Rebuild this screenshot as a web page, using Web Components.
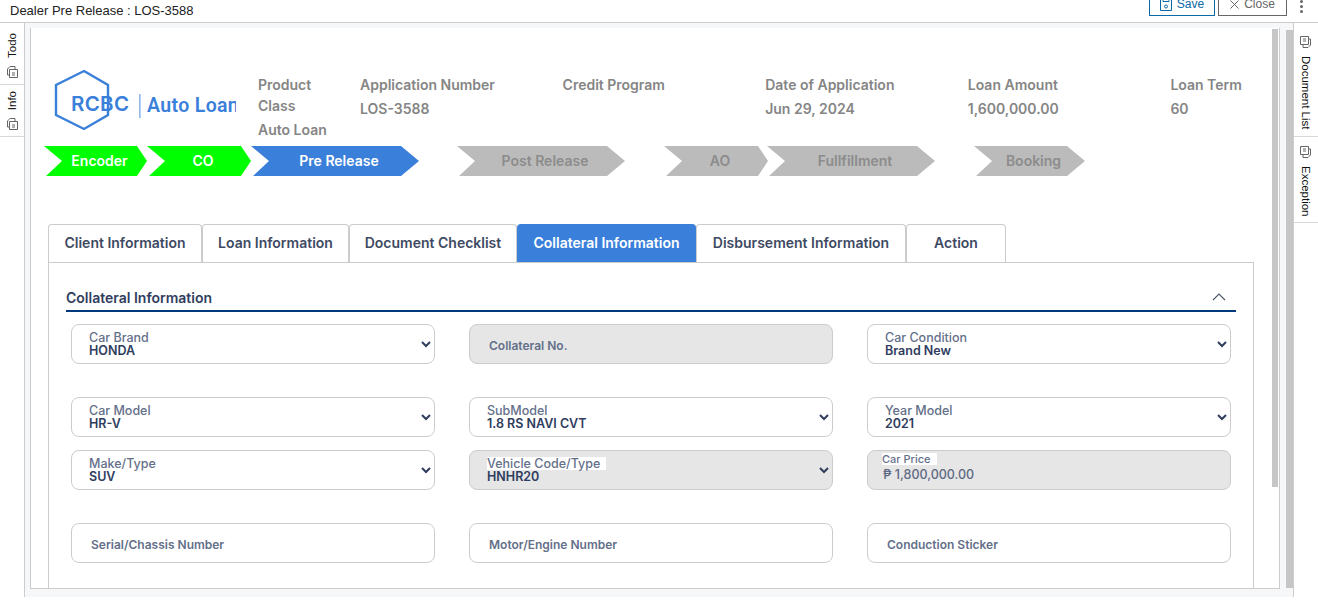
<!DOCTYPE html>
<html>
<head>
<meta charset="utf-8">
<title>Dealer Pre Release</title>
<style>
  html, body { margin: 0; height: 100%; overflow: hidden; background: #fff; }
  body { font-family: Inter, "Open Sans", sans-serif; }
</style>
</head>
<body>
<los-shell>
  <los-header slot="header" title-text="Dealer Pre Release : LOS-3588"></los-header>
  <los-rail slot="left" side="left">
    <los-rail-item label="Todo"></los-rail-item>
    <los-rail-item label="Info"></los-rail-item>
  </los-rail>
  <los-panel slot="main">
    <loan-summary></loan-summary>
    <loan-steps></loan-steps>
    <tab-bar></tab-bar>
    <tab-body>
      <section-title>Collateral Information</section-title>
      <field-grid>
        <form-field label="Car Brand" value="HONDA" kind="select"></form-field>
        <form-field label="Collateral No." kind="text" disabled></form-field>
        <form-field label="Car Condition" value="Brand New" kind="select"></form-field>
        <form-field label="Car Model" value="HR-V" kind="select"></form-field>
        <form-field label="SubModel" value="1.8 RS NAVI CVT" kind="select"></form-field>
        <form-field label="Year Model" value="2021" kind="select"></form-field>
        <form-field label="Make/Type" value="SUV" kind="select"></form-field>
        <form-field label="Vehicle Code/Type" value="HNHR20" kind="select" disabled></form-field>
        <form-field label="Car Price" value="₱ 1,800,000.00" kind="price" disabled></form-field>
        <form-field label="Serial/Chassis Number" kind="text"></form-field>
        <form-field label="Motor/Engine Number" kind="text"></form-field>
        <form-field label="Conduction Sticker" kind="text"></form-field>
      </field-grid>
    </tab-body>
  </los-panel>
  <los-rail slot="right" side="right">
    <los-rail-item label="Document List"></los-rail-item>
    <los-rail-item label="Exception"></los-rail-item>
  </los-rail>
</los-shell>

<script>
class LosShell extends HTMLElement {
  connectedCallback() {
    this.attachShadow({ mode: 'open' });
    this.shadowRoot.innerHTML = `
      <style>
        :host { display: block; height: 609px; overflow: hidden; }
        .top { height: 23px; box-sizing: border-box; border-bottom: 1px solid #ccc; }
        .mid {
          height: 574px;
          box-sizing: border-box;
          border-bottom: 1px solid #d4d4d4;
          display: grid;
          grid-template-columns: 25px 1fr 25px;
        }
        .work {
          background: #f6f7f9;
          display: flex;
          padding: 5px 0 8px 5px;
          min-width: 0;
        }
        .bar { width: 7px; margin: 2px 0 1px 6px; background: #c6c6c6; flex: none; }
      </style>
      <div class="top"><slot name="header"></slot></div>
      <div class="mid">
        <slot name="left"></slot>
        <div class="work">
          <slot name="main"></slot>
          <div class="bar"></div>
        </div>
        <slot name="right"></slot>
      </div>
    `;
  }
}

class LosHeader extends HTMLElement {
  connectedCallback() {
    this.attachShadow({ mode: 'open' });
    this.shadowRoot.innerHTML = `
      <style>
        :host {
          display: flex;
          align-items: flex-end;
          height: 22px;
          overflow: hidden;
          padding: 0 15px 6px 10px;
          box-sizing: border-box;
          font: 12px "Liberation Sans", Arial, sans-serif;
          color: #222;
        }
        .title { flex: 1; font-size: 13px; line-height: 15px; margin-bottom: -2px; }
        button {
          height: 24px;
          box-sizing: border-box;
          background: #fff;
          font: 12px "Liberation Sans", Arial, sans-serif;
          display: flex;
          align-items: center;
          justify-content: center;
          gap: 5px;
          padding: 0;
        }
        .save { width: 66px; border: 1px solid #0a6aa8; color: #0a6aa8; margin-right: 3px; }
        .close { width: 69px; border: 1px solid #666; color: #666; }
        .dots { display: flex; flex-direction: column; gap: 2px; margin-left: 13px; margin-bottom: 3px; }
        .dots i { width: 3px; height: 3px; border-radius: 50%; background: #666; display: block; }
      </style>
      <div class="title">${this.getAttribute('title-text')}</div>
      <button class="save">
        <svg width="12" height="14" viewBox="0 0 12 14" fill="none" stroke="#0a6aa8">
          <path d="M.5 .5h11v13H.5z"/><path d="M3 .5v4h6v-4"/><circle cx="6" cy="9.5" r="1.5"/>
        </svg>Save</button>
      <button class="close">
        <svg width="9" height="9" viewBox="0 0 9 9" stroke="#666"><path d="M.5 .5l8 8M8.5 .5l-8 8"/></svg>Close</button>
      <div class="dots"><i></i><i></i><i></i></div>
    `;
  }
}

class LosRail extends HTMLElement {
  connectedCallback() {
    this.attachShadow({ mode: 'open' });
    const left = this.getAttribute('side') === 'left';
    this.shadowRoot.innerHTML = `
      <style>
        :host {
          display: block;
          box-sizing: border-box;
          ${left ? 'border-right: 1px solid #ccc;' : 'border-left: 1px solid #ccc;'}
          background: #fff;
          padding-top: 4px;
        }
      </style>
      <slot></slot>
    `;
    this.querySelectorAll('los-rail-item').forEach(el => el.setAttribute('side', this.getAttribute('side')));
  }
}

class LosRailItem extends HTMLElement {
  connectedCallback() {
    this.attachShadow({ mode: 'open' });
    const left = this.closest('los-rail').getAttribute('side') === 'left';
    this.shadowRoot.innerHTML = `
      <style>
        :host {
          display: flex;
          flex-direction: ${left ? 'column-reverse' : 'column'};
          align-items: center;
          gap: 8px;
          padding: ${left ? '6px 0 6px' : '0 0 6px'};
          border-bottom: 1px solid #d8d8d8;
          font: 11.5px "Liberation Sans", Arial, sans-serif;
          color: #111;
        }
        span {
          writing-mode: vertical-rl;
          ${left ? 'transform: rotate(180deg);' : ''}
          line-height: 14px;
        }
        svg { display: block; ${left ? '' : 'margin-top: 9px;'} }
      </style>
      <svg width="12" height="12" viewBox="0 0 12 12" fill="none" stroke="#666"
        style="transform: rotate(${left ? -90 : 90}deg)">
        <path d="M.5 3.5h8v8h-8z" /><path d="M3 3.5V1.5h6v0l2.5 2.5v5H8.5"/><path d="M3 6v3M5 6v3"/>
      </svg>
      <span>${this.getAttribute('label')}</span>
    `;
  }
}

class LosPanel extends HTMLElement {
  connectedCallback() {
    this.attachShadow({ mode: 'open' });
    this.shadowRoot.innerHTML = `
      <style>
        :host {
          display: flex;
          flex: 1;
          width: 1250px;
          height: 561px;
          box-sizing: border-box;
          background: #fff;
          border: 1px solid #ccc;
          border-top: 0;
          overflow: hidden;
        }
        .scroll { flex: 1; min-width: 0; padding: 46px 0 0 0; }
        .thumb { width: 6px; height: 458px; margin: 1px 1px 0 0; background: #c6c6c6; flex: none; }
      </style>
      <div class="scroll"><slot></slot></div>
      <div class="thumb"></div>
    `;
  }
}

class LoanSummary extends HTMLElement {
  connectedCallback() {
    this.attachShadow({ mode: 'open' });
    const cols = [
      ['Product Class', 'Auto Loan'],
      ['Application Number', 'LOS-3588'],
      ['Credit Program', ''],
      ['Date of Application', 'Jun 29, 2024'],
      ['Loan Amount', '1,600,000.00'],
      ['Loan Term', '60']
    ];
    this.shadowRoot.innerHTML = `
      <style>
        :host {
          display: flex;
          height: 72px;
          padding-left: 23px;
          color: #858585;
          font: 600 14px/21px Inter, "Open Sans", sans-serif;
        }
        .logo { width: 204px; flex: none; margin-top: -5px; }
        .cols { display: grid; grid-template-columns: 102px repeat(5, 202.6px); align-content: start; }
        .label { margin-bottom: 3px; }
        .col:first-child .label { width: 70px; }
      </style>
      <div class="logo">
        <svg width="182" height="62" viewBox="0 0 182 62">
          <path d="M30 2L54 16V46L30 60L2 46V16Z" transform="translate(0 0)" fill="none" stroke="#3a80da" stroke-width="2.4"/>
          <text x="17" y="42" font-family="Inter, sans-serif" font-weight="600" font-size="20.5" fill="#3a80da" letter-spacing=".3">RCBC</text>
          <rect x="85" y="25" width="1.6" height="24" fill="#8fb8ea"/>
          <text x="93" y="43" font-family="Roboto, sans-serif" font-size="19.5" fill="#3a80da" letter-spacing=".35">Auto Loan</text>
        </svg>
      </div>
      <div class="cols">
        ${cols.map(c => `<div class="col"><div class="label">${c[0]}</div><div>${c[1]}</div></div>`).join('')}
      </div>
    `;
  }
}

class LoanSteps extends HTMLElement {
  connectedCallback() {
    this.attachShadow({ mode: 'open' });
    // name, width, gap before, tip depth, colour
    const steps = [
      ['Encoder', 103, 0, 10, '#00ff00'],
      ['CO', 104, 0, 10, '#00ff00'],
      ['Pre Release', 168, 0, 18, '#3a80da'],
      ['Post Release', 168, 38, 18, '#bbbbbb'],
      ['AO', 104, 39, 10, '#bbbbbb'],
      ['Fullfillment', 168, -1, 18, '#bbbbbb'],
      ['Booking', 111, 39, 18, '#bbbbbb']
    ];
    this.shadowRoot.innerHTML = `
      <style>
        :host { display: flex; height: 30px; padding-left: 13px; font: 600 14px/30px Inter, "Open Sans", sans-serif; }
        div { text-align: center; box-sizing: border-box; padding-left: 8px; flex: none; }
      </style>
      ${steps.map(s => `<div style="width:${s[1]}px;margin-left:${s[2]}px;background:${s[4]};
        color:${s[4] === '#bbbbbb' ? '#8c8c8c' : '#fff'};
        clip-path:polygon(0 0,calc(100% - ${s[3]}px) 0,100% 50%,calc(100% - ${s[3]}px) 100%,2px 100%,18px 50%)">${s[0]}</div>`).join('')}
    `;
  }
}

class TabBar extends HTMLElement {
  connectedCallback() {
    this.attachShadow({ mode: 'open' });
    const tabs = [
      ['Client Information', 154],
      ['Loan Information', 147],
      ['Document Checklist', 168],
      ['Collateral Information', 179, true],
      ['Disbursement Information', 210],
      ['Action', 100]
    ];
    this.shadowRoot.innerHTML = `
      <style>
        :host { display: flex; margin: 48px 0 0 17px; height: 38px; font: 600 14px/36px Inter, "Open Sans", sans-serif; color: #3e4a63; }
        div {
          box-sizing: border-box;
          border: 1px solid #ccc;
          border-bottom: 0;
          border-radius: 4px 4px 0 0;
          text-align: center;
          background: #fff;
          flex: none;
        }
        .on { background: #3a80da; color: #fff; border-color: #3a80da; }
      </style>
      ${tabs.map(t => `<div class="${t[2] ? 'on' : ''}" style="width:${t[1]}px">${t[0]}</div>`).join('')}
    `;
  }
}

class TabBody extends HTMLElement {
  connectedCallback() {
    this.attachShadow({ mode: 'open' });
    this.shadowRoot.innerHTML = `
      <style>
        :host {
          display: block;
          margin-left: 17px;
          width: 1206px;
          height: 330px;
          box-sizing: border-box;
          border: 1px solid #ccc;
          border-bottom: 0;
          padding: 24px 17px 0 17px;
        }
      </style>
      <slot></slot>
    `;
  }
}

class SectionTitle extends HTMLElement {
  connectedCallback() {
    this.attachShadow({ mode: 'open' });
    this.shadowRoot.innerHTML = `
      <style>
        :host {
          display: flex;
          justify-content: space-between;
          align-items: center;
          height: 25px;
          box-sizing: border-box;
          border-bottom: 2px solid #003a7d;
          padding-bottom: 3px;
          font: 600 14px Inter, "Open Sans", sans-serif;
          color: #2f3d5e;
        }
        svg { margin-right: 10px; }
      </style>
      <span><slot></slot></span>
      <svg width="14" height="8" viewBox="0 0 14 8" fill="none" stroke="#4a5568" stroke-width="1.1"><path d="M1 7l6-6 6 6"/></svg>
    `;
  }
}

class FieldGrid extends HTMLElement {
  connectedCallback() {
    this.attachShadow({ mode: 'open' });
    this.shadowRoot.innerHTML = `
      <style>
        :host {
          display: grid;
          grid-template-columns: repeat(3, 364px);
          grid-template-rows: 60px 40px 60px 40px;
          column-gap: 34px;
          row-gap: 13px;
          margin: 12px 0 0 5px;
          align-items: start;
        }
      </style>
      <slot></slot>
    `;
  }
}

class FormField extends HTMLElement {
  connectedCallback() {
    this.attachShadow({ mode: 'open' });
    const label = this.getAttribute('label');
    const value = this.getAttribute('value') || '';
    const kind = this.getAttribute('kind');
    let inner = '';
    if (kind === 'select') {
      inner = `
        <div class="stack"><span class="lab">${label}</span><span class="val">${value}</span></div>
        <svg class="arrow" width="10" height="7" viewBox="0 0 10 7" fill="none" stroke="#2f3d5e" stroke-width="2"><path d="M1 1l4 4 4-4"/></svg>`;
    } else if (kind === 'price') {
      inner = `<div class="stack price"><span class="lab">${label}</span><span class="val">${value}</span></div>`;
    } else {
      inner = `<span class="ph">${label}</span>`;
    }
    this.shadowRoot.innerHTML = `
      <style>
        :host {
          display: flex;
          align-items: center;
          height: 40px;
          box-sizing: border-box;
          border: 1px solid #ccc;
          border-radius: 8px;
          background: #fff;
          padding-left: 17px;
          padding-right: 3px;
          font-family: Inter, "Open Sans", sans-serif;
        }
        :host([disabled]) { background: #e6e6e6; }
        .stack { flex: 1; display: flex; flex-direction: column; align-items: flex-start; }
        .lab { font: 500 12.5px/13px Inter, "Open Sans", sans-serif; color: #64708a; }
        .val { font: 600 12.5px/13px Inter, "Open Sans", sans-serif; color: #2f3d5e; }
        :host([disabled]) .lab { background: #fff; padding-right: 6px; }
        .arrow { margin: 0 0 0 0; }
        .ph { font: 600 12px Inter, "Open Sans", sans-serif; color: #64708a; padding: 2px 0 0 2px; }
        :host([disabled]) .ph { background: none; }
        .price { align-self: flex-start; margin: 2px 0 0 -3px; }
        .price .lab { font-size: 11px; line-height: 12px; }
        .price .val { font-weight: 500; color: #5d6a84; line-height: 19px; margin-left: 1px; }
      </style>
      ${inner}
    `;
  }
}

customElements.define('los-shell', LosShell);
customElements.define('los-header', LosHeader);
customElements.define('los-rail', LosRail);
customElements.define('los-rail-item', LosRailItem);
customElements.define('los-panel', LosPanel);
customElements.define('loan-summary', LoanSummary);
customElements.define('loan-steps', LoanSteps);
customElements.define('tab-bar', TabBar);
customElements.define('tab-body', TabBody);
customElements.define('section-title', SectionTitle);
customElements.define('field-grid', FieldGrid);
customElements.define('form-field', FormField);
</script>
</body>
</html>
